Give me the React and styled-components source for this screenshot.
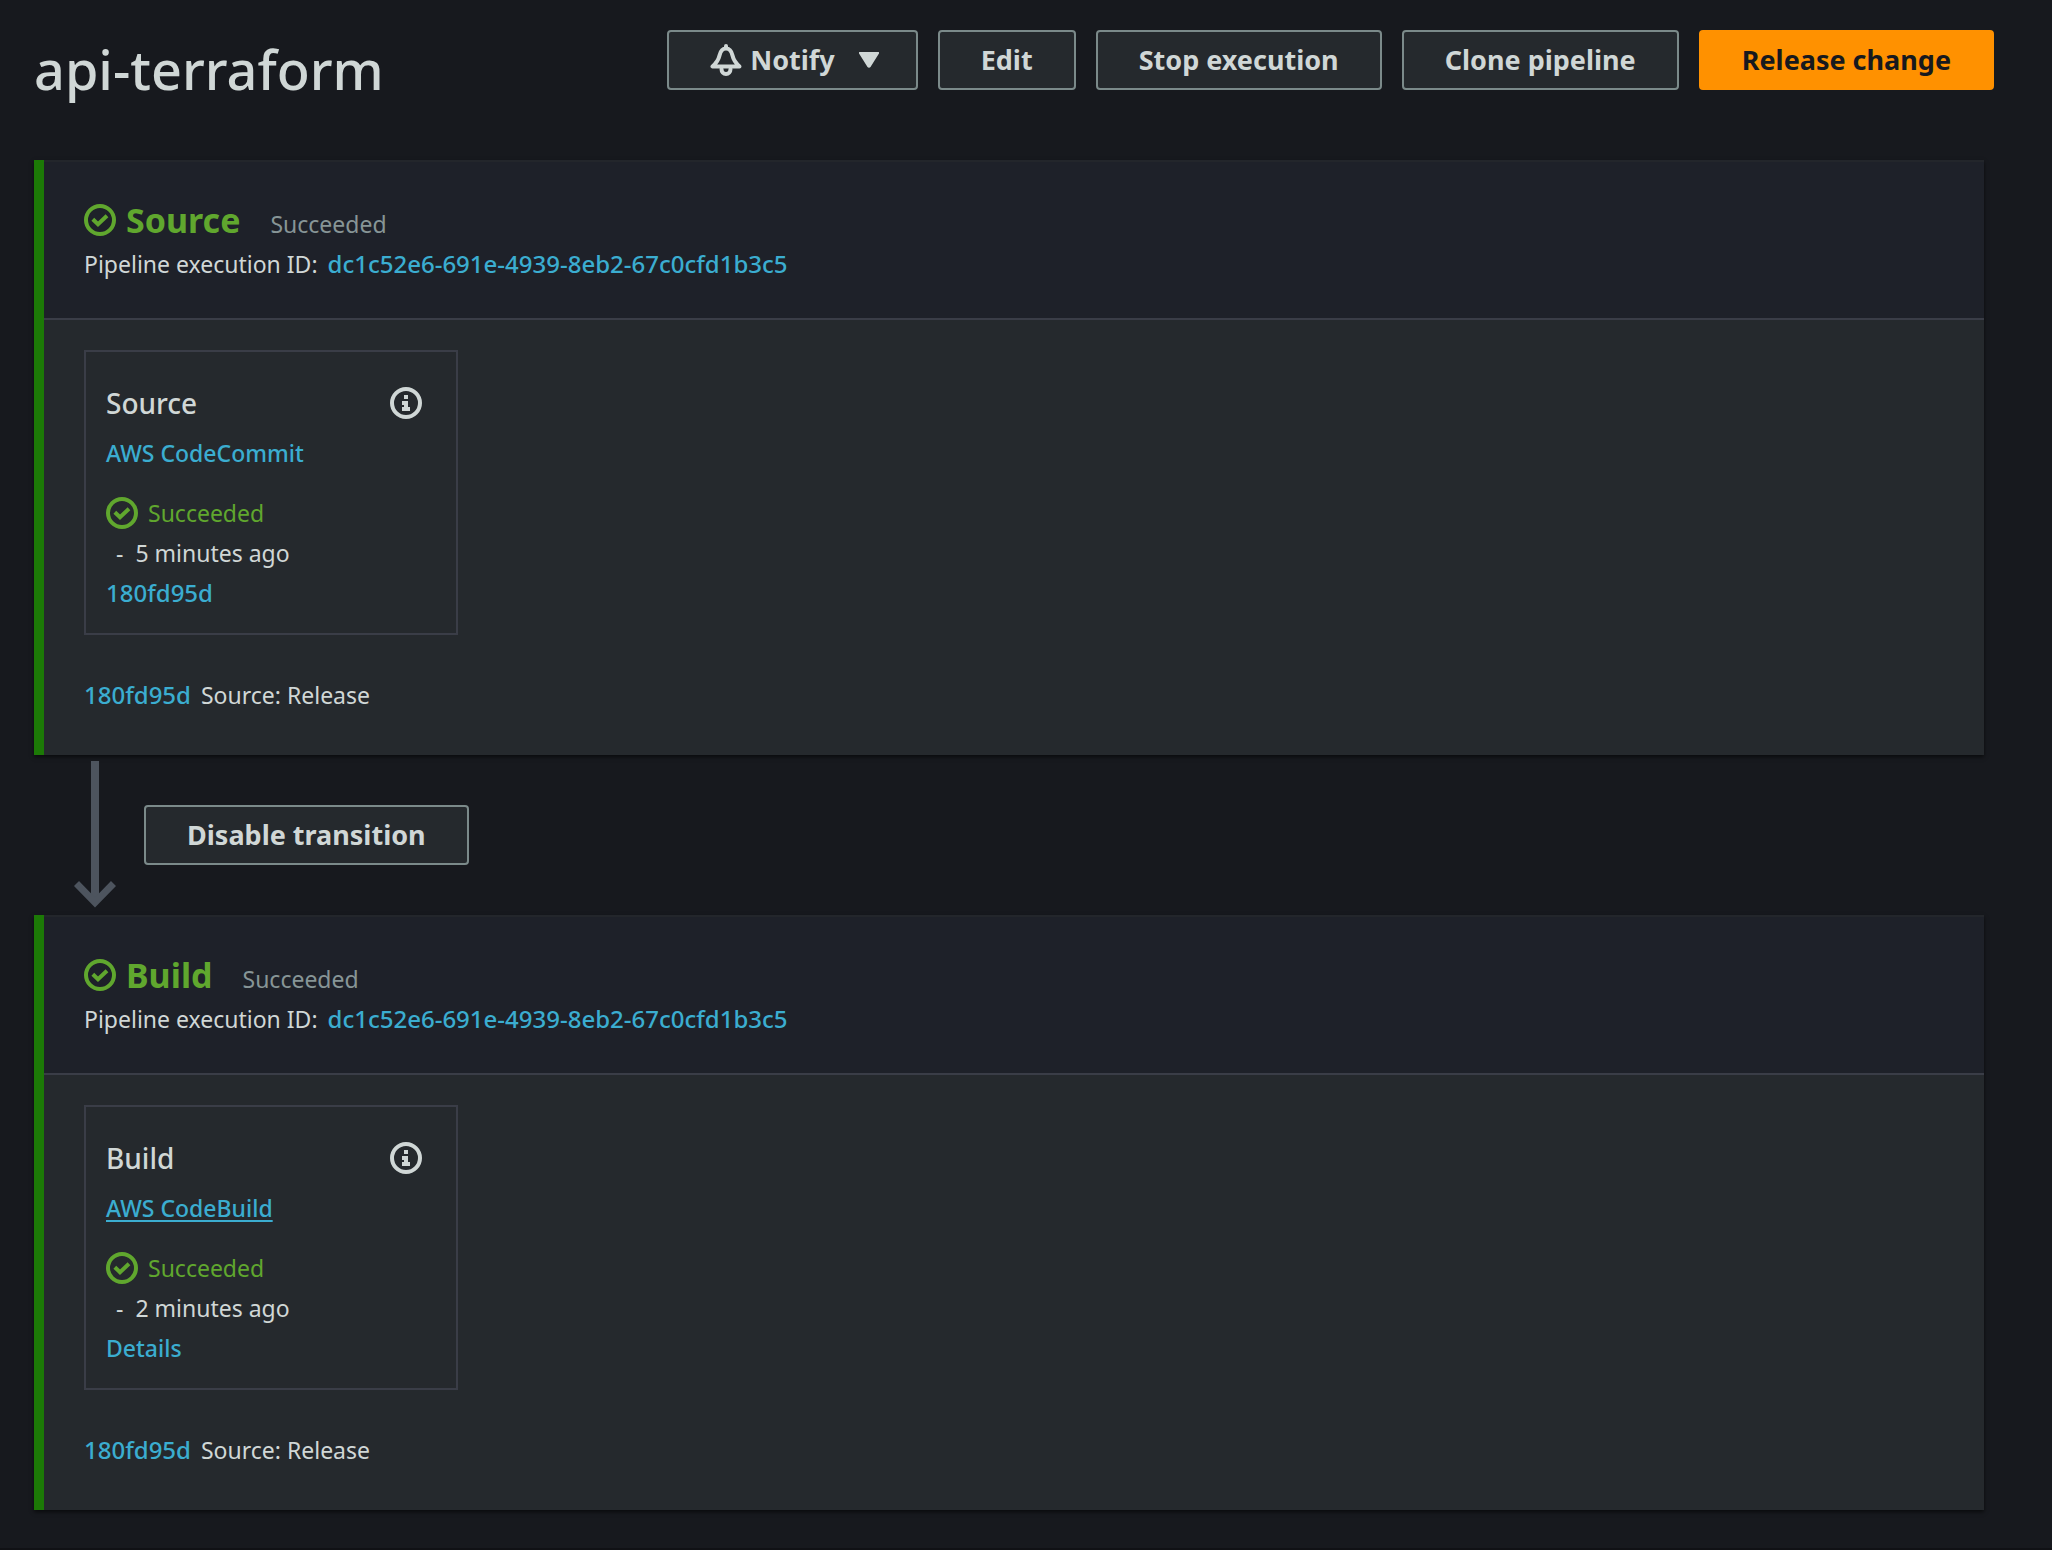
import React from "react";
import styled, { createGlobalStyle } from "styled-components";

const color = {
  page: "#17191e",
  stageHeader: "#1e2129",
  surface: "#25292d",
  divider: "#3a3d47",
  edge: "#23262b",
  text: "#d0d7d6",
  muted: "#879596",
  link: "#3badd0",
  success: "#60a72e",
  stripe: "#1c7906",
  control: "#7b8a8a",
  arrow: "#4d545e",
  primary: "#ff9100",
};

const GlobalStyle = createGlobalStyle`
  *, *::before, *::after { box-sizing: border-box; }
  body {
    margin: 0;
    background: ${color.page};
    color: ${color.text};
    font: 400 23px/40px "Noto Sans", "Open Sans", sans-serif;
  }
  h1, h2, h3, p { margin: 0; }
`;

const Page = styled.main`
  min-height: 100vh;
  padding: 30px 68px 38px 34px;
  border-bottom: 2px solid #101115;
`;

const PageHeader = styled.header`
  display: flex;
  justify-content: space-between;
  align-items: flex-start;
  gap: 20px;
  margin: 0 -10px 52px 0;
`;

const PageTitle = styled.h1`
  font-size: 54px;
  font-weight: 500;
  line-height: 78px;
`;

const Actions = styled.div`
  display: flex;
  gap: 20px;
`;

const Button = styled.button`
  display: inline-flex;
  align-items: center;
  justify-content: center;
  gap: 8px;
  height: 60px;
  padding: 0 41px;
  border: 2px solid ${(p) => (p.$primary ? color.primary : color.control)};
  border-radius: 4px;
  background: ${(p) => (p.$primary ? color.primary : color.surface)};
  color: ${(p) => (p.$primary ? color.page : color.text)};
  font: 700 27px/40px "Noto Sans", "Open Sans", sans-serif;
  white-space: nowrap;
  cursor: pointer;
`;

const Icon = styled.svg`
  display: block;
  flex: none;
  align-self: center;
  width: 32px;
  height: 32px;
  fill: none;
  stroke: currentColor;
  stroke-width: 4;
`;

const Caret = styled.svg`
  flex: none;
  width: 20px;
  height: 16px;
  margin: 0 -4px 0 16px;
  fill: currentColor;
`;

const Stage = styled.section`
  border-left: 10px solid ${color.stripe};
  background: ${color.surface};
  box-shadow: 0 2px 4px rgba(0, 0, 0, 0.6);
`;

const StageHeader = styled.header`
  padding: 34px 40px;
  border-top: 2px solid ${color.edge};
  border-bottom: 2px solid ${color.divider};
  background: ${color.stageHeader};
`;

const StageHeading = styled.div`
  display: flex;
  align-items: baseline;
  gap: 10px;
  height: 48px;
  color: ${color.success};
`;

const StageName = styled.h2`
  font-size: 34px;
  font-weight: 700;
  line-height: 48px;
`;

const StageStatus = styled.span`
  margin-left: 20px;
  color: ${color.muted};
`;

const Line = styled.p`
  display: flex;
  gap: 10px;
`;

const Link = styled.a`
  color: ${color.link};
  font-weight: 500;
  text-decoration: ${(p) => (p.$underlined ? "underline" : "none")};
  text-decoration-thickness: 2px;
  text-underline-offset: 3px;
`;

const HashLink = styled(Link)`
  font-size: 24px;
`;

const StageBody = styled.div`
  padding: 30px 40px 40px;
`;

const ActionCard = styled.article`
  width: 374px;
  max-width: 100%;
  margin-bottom: 40px;
  padding: 20px;
  border: 2px solid ${color.divider};
`;

const CardHeader = styled.div`
  display: flex;
  align-items: center;
  justify-content: space-between;
  height: 61px;
  padding-right: 14px;
`;

const CardTitle = styled.h3`
  font-size: 28px;
  font-weight: 500;
`;

const InfoButton = styled.button`
  padding: 0;
  border: 0;
  background: none;
  color: ${color.text};
  cursor: pointer;
`;

const Status = styled.p`
  display: flex;
  gap: 10px;
  margin-top: 20px;
  color: ${color.success};
`;

const Elapsed = styled.p`
  display: flex;
  gap: 12px;
  padding-left: 10px;
`;

const Transition = styled.div`
  display: flex;
  align-items: center;
  gap: 28px;
  height: 160px;
  padding-left: 40px;
`;

const Arrow = styled.svg`
  flex: none;
  width: 42px;
  height: 148px;
  fill: none;
  stroke: ${color.arrow};
`;

function CheckIcon() {
  return (
    <Icon viewBox="0 0 32 32" aria-hidden="true">
      <circle cx="16" cy="16" r="14" />
      <path d="M8.8 15.2 14 20.2 23 11.8" />
    </Icon>
  );
}

function InfoIcon() {
  return (
    <Icon viewBox="0 0 32 32" aria-hidden="true">
      <circle cx="16" cy="16" r="14" />
      <path d="M14 8h4v4h-4zM12 14h6v6h2v4h-8v-4h2v-2h-2z" fill="currentColor" stroke="none" />
    </Icon>
  );
}

function BellIcon() {
  return (
    <Icon viewBox="0 0 32 32" aria-hidden="true" strokeLinejoin="round" strokeLinecap="round">
      <path d="M16 2v2M2.5 22.500h27C25 18.500 23.500 16 22.500 11.500 21.500 7 19.500 4.500 16 4.500S10.500 7 9.500 11.500C8.500 16 7 18.500 2.500 22.500z" />
      <path d="M11.500 25c0 3 2 5 4.500 5s4.500-2 4.500-5" />
    </Icon>
  );
}

const EXECUTION_ID = "dc1c52e6-691e-4939-8eb2-67c0cfd1b3c5";
const COMMIT = "180fd95d";

function PipelineStage({ name, provider, hovered, elapsed, detail }) {
  return (
    <Stage>
      <StageHeader>
        <StageHeading>
          <CheckIcon />
          <StageName>{name}</StageName>
          <StageStatus>Succeeded</StageStatus>
        </StageHeading>
        <Line>
          Pipeline execution ID:
          <HashLink href="#execution">{EXECUTION_ID}</HashLink>
        </Line>
      </StageHeader>
      <StageBody>
        <ActionCard>
          <CardHeader>
            <CardTitle>{name}</CardTitle>
            <InfoButton type="button" aria-label={`${name} action information`}>
              <InfoIcon />
            </InfoButton>
          </CardHeader>
          <Line>
            <Link href="#provider" $underlined={hovered}>
              {provider}
            </Link>
          </Line>
          <Status>
            <CheckIcon />
            Succeeded
          </Status>
          <Elapsed>
            <span>-</span>
            <span>{elapsed}</span>
          </Elapsed>
          <Line>{detail}</Line>
        </ActionCard>
        <Line>
          <HashLink href="#commit">{COMMIT}</HashLink>
          <span>Source: Release</span>
        </Line>
      </StageBody>
    </Stage>
  );
}

export default function App() {
  return (
    <>
      <GlobalStyle />
      <Page>
        <PageHeader>
          <PageTitle>api-terraform</PageTitle>
          <Actions>
            <Button type="button" aria-haspopup="menu">
              <BellIcon />
              Notify
              <Caret viewBox="0 0 20 16" aria-hidden="true">
                <path d="M1 0h18a1 1 0 0 1 .8 1.800L11.500 15a1.800 1.800 0 0 1-3 0L.200 1.800A1 1 0 0 1 1 0z" />
              </Caret>
            </Button>
            <Button type="button">Edit</Button>
            <Button type="button">Stop execution</Button>
            <Button type="button">Clone pipeline</Button>
            <Button type="button" $primary>
              Release change
            </Button>
          </Actions>
        </PageHeader>
        <PipelineStage
          name="Source"
          provider="AWS CodeCommit"
          elapsed="5 minutes ago"
          detail={<HashLink href="#commit">{COMMIT}</HashLink>}
        />
        <Transition>
          <Arrow viewBox="0 0 42 148" aria-hidden="true">
            <path d="M21 0v139" strokeWidth="8" />
            <path d="M2.500 122.500 21 141.500 39.500 122.500" strokeWidth="7" />
          </Arrow>
          <Button type="button">Disable transition</Button>
        </Transition>
        <PipelineStage
          name="Build"
          provider="AWS CodeBuild"
          hovered
          elapsed="2 minutes ago"
          detail={<Link href="#details">Details</Link>}
        />
      </Page>
    </>
  );
}
